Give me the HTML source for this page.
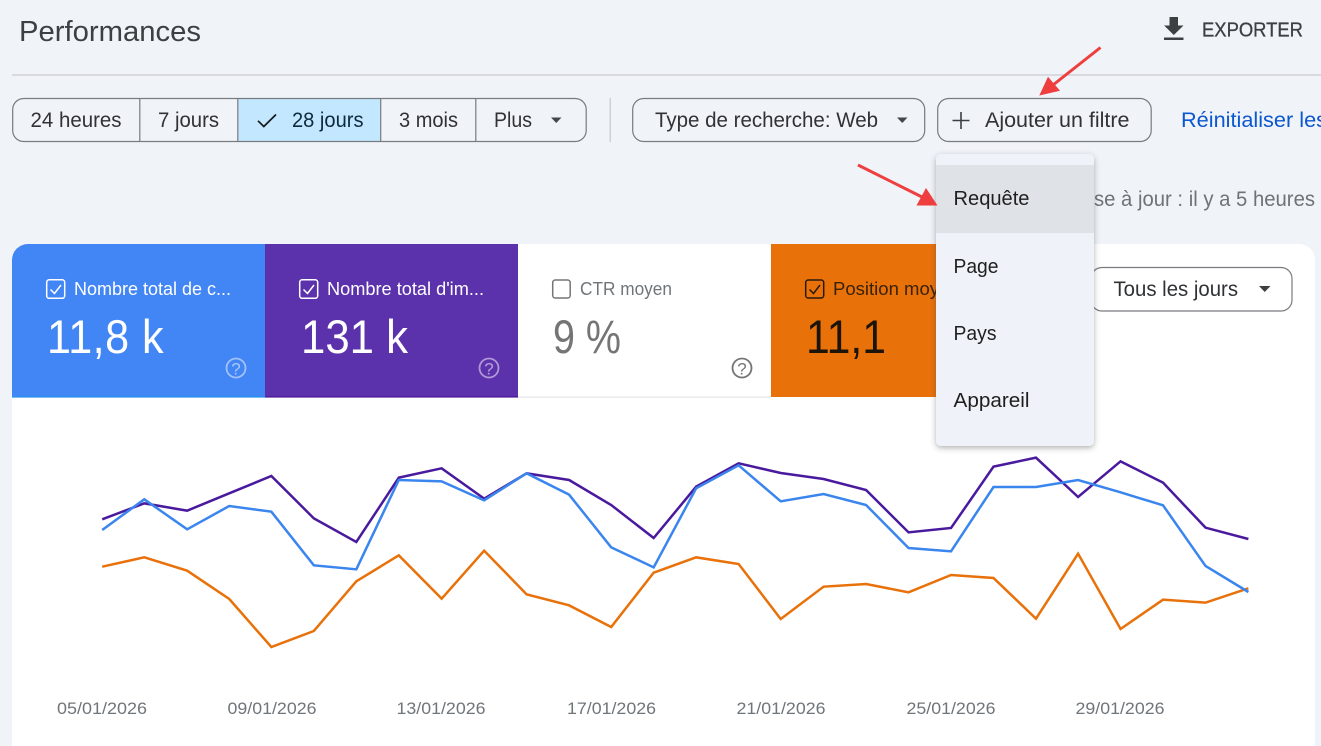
<!DOCTYPE html>
<html lang="fr"><head><meta charset="utf-8"><title>Performances</title>
<style>
html,body{margin:0;padding:0;width:1321px;height:746px;overflow:hidden;background:#f0f3f8}
svg{display:block}
text{font-family:"Liberation Sans",sans-serif;fill:#3c4043}
.b{font-size:21px;fill:#303235}
.d{font-size:17px;fill:#70757a}
.l{font-size:18.5px;fill:#fff}
.v{font-size:47px;fill:#fff}
.m{font-size:20.5px;fill:#1f1f1f}
</style></head><body>
<svg width="1321" height="746" viewBox="0 0 1321 746" xmlns="http://www.w3.org/2000/svg">
<defs>
<filter id="sh" x="-20%" y="-10%" width="140%" height="125%"><feDropShadow dx="0" dy="2" stdDeviation="3" flood-color="#3c4043" flood-opacity=".4"/></filter>
<clipPath id="card"><path d="M28 244H1299a16 16 0 0 1 16 16V746H12V260a16 16 0 0 1 16-16z"/></clipPath>
</defs>
<rect width="1321" height="746" fill="#f0f3f8"/>

<text x="19" y="41" font-size="29" textLength="182" lengthAdjust="spacingAndGlyphs" style="fill:#3c4043">Performances</text>
<path d="M1169.500 17h8.500v8.500h5.500l-9.700 9.500-9.700-9.500h5.400z" fill="#3c4043"/>
<rect x="1164" y="37.500" width="19.500" height="2.500" fill="#3c4043"/>
<text x="1202" y="36.500" font-size="20" textLength="101" lengthAdjust="spacingAndGlyphs" style="fill:#3c4043;stroke:#3c4043;stroke-width:.3">EXPORTER</text>
<rect x="12" y="74.500" width="1309" height="1" fill="#bfc2c6"/>

<!-- segmented -->
<path d="M238 98.500H381V141.500H238z" fill="#c2e7ff"/>
<rect x="12.700" y="98.500" width="573.500" height="43" rx="11" fill="none" stroke="#787b7f" stroke-width="1.200"/>
<path d="M139.800 98.500V141.500M237.800 98.500V141.500M380.700 98.500V141.500M475.800 98.500V141.500" stroke="#787b7f" stroke-width="1.200"/>
<text class="b" x="30.500" y="127" textLength="91" lengthAdjust="spacingAndGlyphs">24 heures</text>
<text class="b" x="158" y="127" textLength="61" lengthAdjust="spacingAndGlyphs">7 jours</text>
<path d="M258 120.800L263.800 126.500L276 114.500" fill="none" stroke="#14191e" stroke-width="1.700"/>
<text class="b" x="292" y="127" textLength="71.500" lengthAdjust="spacingAndGlyphs" style="fill:#0f2a3c">28 jours</text>
<text class="b" x="399" y="127" textLength="59" lengthAdjust="spacingAndGlyphs">3 mois</text>
<text class="b" x="494" y="127" textLength="38" lengthAdjust="spacingAndGlyphs">Plus</text>
<path d="M551 117.500h10.500l-5.250 5.500z" fill="#44474a"/>
<rect x="609.600" y="98" width="1.300" height="44" fill="#c9ccd0"/>

<rect x="632.700" y="98.500" width="292" height="43" rx="11" fill="none" stroke="#787b7f" stroke-width="1.200"/>
<text class="b" x="655" y="127" textLength="223" lengthAdjust="spacingAndGlyphs">Type de recherche: Web</text>
<path d="M897 117.500h10.500l-5.250 5.500z" fill="#44474a"/>

<rect x="937.700" y="98.500" width="213.500" height="43" rx="11" fill="none" stroke="#787b7f" stroke-width="1.200"/>
<path d="M961 112V129M952.500 120.500H969.500" stroke="#3c4043" stroke-width="1.600"/>
<text class="b" x="985" y="127" textLength="144.500" lengthAdjust="spacingAndGlyphs">Ajouter un filtre</text>
<text x="1181" y="127" font-size="21" textLength="146" lengthAdjust="spacingAndGlyphs" style="fill:#0b57d0">Réinitialiser les</text>

<text x="1094" y="206" font-size="21" textLength="221" lengthAdjust="spacingAndGlyphs" style="fill:#6f7377">se à jour : il y a 5 heures</text>

<!-- card -->
<g clip-path="url(#card)">
<rect x="12" y="244" width="1303" height="502" fill="#fff"/>
<rect x="12" y="244" width="253" height="153" fill="#4285f4"/>
<rect x="265" y="244" width="253" height="153" fill="#5c32ac"/>
<rect x="771" y="244" width="253" height="153" fill="#e8710a"/>
<rect x="12" y="396" width="253" height="1.600" fill="#2a8ff0"/>
<rect x="265" y="396" width="253" height="1.600" fill="#4f1ea0"/>
<rect x="518" y="396.500" width="253" height="1.200" fill="#e3e4e6"/>
</g>

<!-- tile 1 -->
<rect x="46.700" y="279.800" width="18" height="18.500" rx="2.500" fill="none" stroke="#fff" stroke-width="1.500"/>
<path d="M50.500 289.500L54.500 293.500L61 285" fill="none" stroke="#fff" stroke-width="1.500"/>
<text class="l" x="74" y="295" textLength="157" lengthAdjust="spacingAndGlyphs">Nombre total de c...</text>
<text class="v" x="47" y="353" textLength="117" lengthAdjust="spacingAndGlyphs" style="letter-spacing:.5px">11,8 k</text>
<circle cx="236" cy="368" r="9.500" fill="none" stroke="#fff" stroke-opacity=".5" stroke-width="1.800"/>
<text x="236" y="374.500" font-size="17" text-anchor="middle" style="fill:#fff;fill-opacity:.55">?</text>

<!-- tile 2 -->
<rect x="299.700" y="279.800" width="18" height="18.500" rx="2.500" fill="none" stroke="#fff" stroke-width="1.500"/>
<path d="M303.500 289.500L307.500 293.500L314 285" fill="none" stroke="#fff" stroke-width="1.500"/>
<text class="l" x="327" y="295" textLength="157" lengthAdjust="spacingAndGlyphs">Nombre total d'im...</text>
<text class="v" x="301" y="353" textLength="107" lengthAdjust="spacingAndGlyphs">131 k</text>
<circle cx="489" cy="368" r="9.500" fill="none" stroke="#fff" stroke-opacity=".5" stroke-width="1.800"/>
<text x="489" y="374.500" font-size="17" text-anchor="middle" style="fill:#fff;fill-opacity:.55">?</text>

<!-- tile 3 -->
<rect x="552.700" y="280" width="17.500" height="18" rx="2.500" fill="none" stroke="#757575" stroke-width="1.500"/>
<text class="l" x="580" y="295" textLength="92" lengthAdjust="spacingAndGlyphs" style="fill:#70757a">CTR moyen</text>
<text class="v" x="553" y="353" textLength="68" lengthAdjust="spacingAndGlyphs" style="fill:#757575">9 %</text>
<circle cx="742" cy="368" r="9.500" fill="none" stroke="#757575" stroke-width="1.800"/>
<text x="742" y="374.500" font-size="17" text-anchor="middle" style="fill:#757575">?</text>

<!-- tile 4 -->
<rect x="805.700" y="280" width="18" height="18" rx="2.500" fill="none" stroke="#2a1a0c" stroke-width="1.500"/>
<path d="M809.500 289.500L813.500 293.500L820 285" fill="none" stroke="#2a1a0c" stroke-width="1.500"/>
<text class="l" x="833" y="295" textLength="106" lengthAdjust="spacingAndGlyphs" style="fill:#3a2208">Position moy</text>
<text class="v" x="806" y="353" textLength="80" lengthAdjust="spacingAndGlyphs" style="fill:#1c1408">11,1</text>

<!-- dropdown right -->
<rect x="1091" y="267.500" width="201" height="43.500" rx="11" fill="#fff" stroke="#787b7f" stroke-width="1.200"/>
<text class="b" x="1113.500" y="296" textLength="124.500" lengthAdjust="spacingAndGlyphs">Tous les jours</text>
<path d="M1259 286h11.500l-5.750 6z" fill="#3c4043"/>

<!-- chart -->
<g transform="translate(80,440) scale(.38270,.33333)" fill="none" stroke-linejoin="miter">
<polyline vector-effect="non-scaling-stroke" stroke="#e8710a" stroke-width="2.500" points="58,380 168,352 280,392 390,477 500,621 611,573 722,424 833,346 945,476 1056,332 1167,463 1278,496 1388,561 1499,398 1610,352 1721,372 1831,537 1943,440 2054,432 2165,457 2276,405 2387,414 2498,536 2608,341 2719,567 2830,479 2941,488 3053,445"/>
<polyline vector-effect="non-scaling-stroke" stroke="#4a1a9e" stroke-width="2.500" points="58,238 168,190 280,212 390,160 500,108 611,235 722,306 833,113 945,85 1056,176 1167,100 1278,120 1388,195 1499,294 1610,140 1721,70 1831,99 1943,117 2054,150 2165,277 2276,264 2387,80 2498,53 2608,171 2719,64 2830,128 2941,263 3053,297"/>
<polyline vector-effect="non-scaling-stroke" stroke="#3a85ee" stroke-width="2.500" points="58,270 168,178 280,268 390,198 500,215 611,376 722,388 833,120 945,124 1056,181 1167,100 1278,164 1388,322 1499,382 1610,145 1721,76 1831,184 1943,162 2054,195 2165,324 2276,334 2387,141 2498,141 2608,120 2719,157 2830,196 2941,378 3053,456"/>
</g>
<text class="d" x="57" y="714" textLength="90" lengthAdjust="spacingAndGlyphs">05/01/2026</text>
<text class="d" x="227.500" y="714" textLength="89" lengthAdjust="spacingAndGlyphs">09/01/2026</text>
<text class="d" x="396.500" y="714" textLength="89" lengthAdjust="spacingAndGlyphs">13/01/2026</text>
<text class="d" x="567" y="714" textLength="89" lengthAdjust="spacingAndGlyphs">17/01/2026</text>
<text class="d" x="736.500" y="714" textLength="89" lengthAdjust="spacingAndGlyphs">21/01/2026</text>
<text class="d" x="906.500" y="714" textLength="89" lengthAdjust="spacingAndGlyphs">25/01/2026</text>
<text class="d" x="1075.500" y="714" textLength="89" lengthAdjust="spacingAndGlyphs">29/01/2026</text>

<!-- menu -->
<rect x="936" y="154" width="158" height="292" rx="5" fill="#eff2f8" filter="url(#sh)"/>
<rect x="936" y="165" width="158" height="68" fill="#dfe3e7"/>
<text class="m" x="953.500" y="205" textLength="76" lengthAdjust="spacingAndGlyphs">Requête</text>
<text class="m" x="953.500" y="273" textLength="45" lengthAdjust="spacingAndGlyphs">Page</text>
<text class="m" x="953.500" y="340" textLength="43" lengthAdjust="spacingAndGlyphs">Pays</text>
<text class="m" x="953.500" y="407" textLength="76" lengthAdjust="spacingAndGlyphs">Appareil</text>

<!-- red arrows -->
<path d="M1100.500 47.500L1053 85" stroke="#ee3e3e" stroke-width="3"/>
<path d="M1039.300 95.500L1048 76.700L1060 90.700z" fill="#ee3e3e"/>
<path d="M858 165L923 197.500" stroke="#ee3e3e" stroke-width="3"/>
<path d="M926 188L916.500 205.500H937.500z" fill="#ee3e3e"/>
</svg>
</body></html>
